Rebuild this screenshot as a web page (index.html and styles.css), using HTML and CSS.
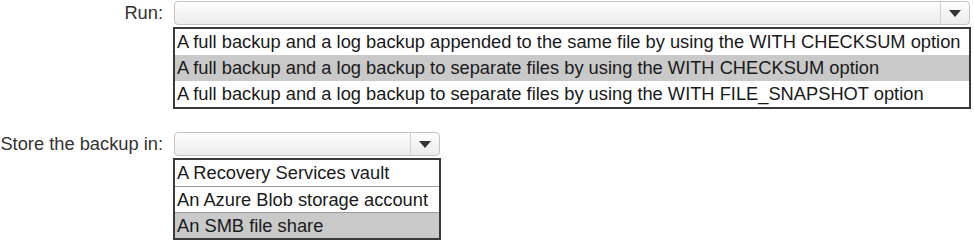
FILE: index.html
```html
<!DOCTYPE html>
<html lang="en">
<head>
    <meta charset="UTF-8">
    <title>Backup options</title>
    <link rel="stylesheet" href="styles.css">
</head>
<body>

<div class="form">
    <div class="field run">
        <label class="label">Run:</label>
        <div class="control">
            <div class="select">
                <span class="value"></span>
                <span class="arrow"></span>
            </div>
            <ul class="options">
                <li>A full backup and a log backup appended to the same file by using the WITH CHECKSUM option</li>
                <li class="selected">A full backup and a log backup to separate files by using the WITH CHECKSUM option</li>
                <li>A full backup and a log backup to separate files by using the WITH FILE_SNAPSHOT option</li>
            </ul>
        </div>
    </div>

    <div class="field store">
        <label class="label">Store the backup in:</label>
        <div class="control">
            <div class="select">
                <span class="value"></span>
                <span class="arrow"></span>
            </div>
            <ul class="options lined">
                <li>A Recovery Services vault</li>
                <li>An Azure Blob storage account</li>
                <li class="selected">An SMB file share</li>
            </ul>
        </div>
    </div>
</div>

</body>
</html>
```

FILE: styles.css
```css
body {
    margin: 0;
    background: #fff;
    font-family: "Liberation Sans", Arial, sans-serif;
    color: #222;
}
.form {
    display: flex;
    flex-direction: column;
    gap: 23px;
    padding-top: 1px;
}
.field {
    display: grid;
    grid-template-columns: 163px auto;
    column-gap: 11px;
    align-items: start;
}
.label {
    text-align: right;
    font-size: 18.3px;
    line-height: 24px;
    color: #333;
    white-space: nowrap;
}
.control {
    display: flex;
    flex-direction: column;
    gap: 2px;
}
.select {
    display: flex;
    height: 22px;
    border: 1px solid #c4c4c4;
    border-radius: 4px;
    background: linear-gradient(#fdfdfd, #ececec);
}
.run .select {
    width: 794px;
}
.store .select {
    width: 264px;
}
.value {
    flex: 1;
}
.arrow {
    width: 28px;
    border-left: 1px solid #d0d0d0;
    display: flex;
    align-items: center;
    justify-content: center;
}
.arrow::after {
    content: "";
    border-left: 6px solid transparent;
    border-right: 6px solid transparent;
    border-top: 7px solid #333;
}
.options {
    list-style: none;
    margin: 0;
    padding: 0;
    border: 2px solid #3a3a3a;
    font-size: 18.3px;
}
.run .options {
    width: 794px;
    margin-left: -1px;
}
.store .options {
    width: 264px;
    margin-left: -1px;
}
.options li {
    height: 26px;
    line-height: 26px;
    padding-left: 2px;
    white-space: nowrap;
    color: #1a1a1a;
}
.options.lined li + li {
    border-top: 1px solid #999;
    height: 25px;
}
.options li.selected {
    background: #c9c9c9;
}
```
